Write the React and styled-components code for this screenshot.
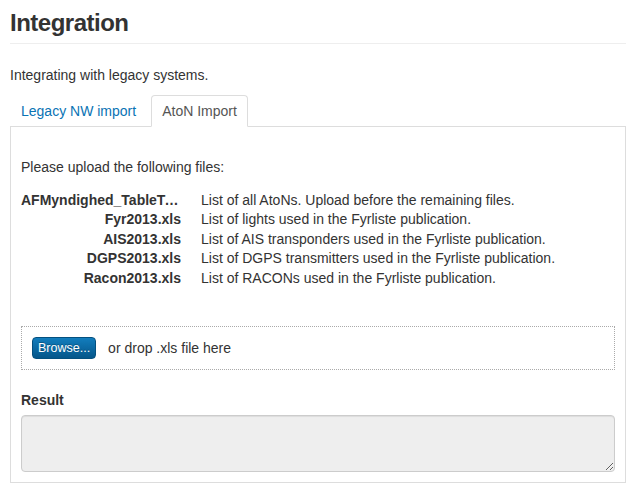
import styled, { createGlobalStyle } from "styled-components"

const GlobalStyle = createGlobalStyle`
  html, body {
    margin: 0;
    padding: 0;
    background: #ffffff;
  }
  body {
    font-family: "Liberation Sans", Arial, Helvetica, sans-serif;
    font-size: 14px;
    line-height: 20px;
    color: #333333;
  }
`

const Page = styled.div`
  padding: 0 0 0 10px;
  width: 616px;
`

const Header = styled.div`
  padding: 8px 0 5px;
  border-bottom: 1px solid #eeeeee;
`

const Title = styled.h1`
  margin: 0;
  font-size: 24px;
  line-height: 30px;
  font-weight: bold;
  letter-spacing: -0.5px;
  color: #333333;
`

const Lead = styled.p`
  margin: 21px 0 10px;
`

const Tabs = styled.ul`
  display: flex;
  list-style: none;
  margin: 0 0 -1px;
  padding: 0;
`

const Tab = styled.li`
  margin-right: 4px;
  padding: 5px 10px;
  border: 1px solid ${p => (p.$active ? "#dddddd" : "transparent")};
  border-bottom-color: ${p => (p.$active ? "#ffffff" : "transparent")};
  border-radius: 4px 4px 0 0;
  background: ${p => (p.$active ? "#ffffff" : "transparent")};
  color: ${p => (p.$active ? "#555555" : "#0a73b4")};
  cursor: pointer;
`

const Panel = styled.div`
  border: 1px solid #dddddd;
  padding: 10px;
`

const Intro = styled.p`
  margin: 20px 0 14px;
`

const FileList = styled.dl`
  margin: 0;
  line-height: 19.4px;
`

const FileRow = styled.div`
  display: flex;
`

const FileName = styled.dt`
  width: 160px;
  flex-shrink: 0;
  text-align: right;
  font-weight: bold;
  white-space: nowrap;
  overflow: hidden;
  text-overflow: ellipsis;
`

const FileDesc = styled.dd`
  margin: 0 0 0 20px;
`

const DropZone = styled.div`
  margin-top: 38px;
  border: 1px dotted #aaaaaa;
  padding: 10px;
  display: flex;
  align-items: center;
  gap: 12px;
`

const BrowseButton = styled.button`
  height: 22px;
  padding: 0 5px;
  font-family: "Liberation Sans", Arial, sans-serif;
  font-size: 12.5px;
  line-height: 20px;
  color: #ffffff;
  text-shadow: 0 -1px 0 rgba(0, 0, 0, 0.25);
  background: linear-gradient(#127dbd, #05568a);
  border: 1px solid #04507f;
  border-radius: 4px;
  cursor: pointer;
`

const DropText = styled.span`
  color: #333333;
`

const Label = styled.div`
  margin: 20px 0 5px;
  font-weight: bold;
`

const ResultBox = styled.textarea`
  display: block;
  box-sizing: border-box;
  width: 100%;
  height: 57px;
  margin: 0;
  padding: 4px 6px;
  border: 1px solid #cccccc;
  border-radius: 4px;
  background: #eeeeee;
  box-shadow: inset 0 1px 1px rgba(0, 0, 0, 0.075);
  font-family: "Liberation Sans", Arial, sans-serif;
  font-size: 14px;
  color: #555555;
  outline: none;
`

const files = [
  ["AFMyndighed_TableTemplate.xls", "List of all AtoNs. Upload before the remaining files."],
  ["Fyr2013.xls", "List of lights used in the Fyrliste publication."],
  ["AIS2013.xls", "List of AIS transponders used in the Fyrliste publication."],
  ["DGPS2013.xls", "List of DGPS transmitters used in the Fyrliste publication."],
  ["Racon2013.xls", "List of RACONs used in the Fyrliste publication."],
]

const App = () => {
  return (
    <Page>
      <GlobalStyle />
      <Header>
        <Title>Integration</Title>
      </Header>
      <Lead>Integrating with legacy systems.</Lead>
      <Tabs>
        <Tab>Legacy NW import</Tab>
        <Tab $active>AtoN Import</Tab>
      </Tabs>
      <Panel>
        <Intro>Please upload the following files:</Intro>
        <FileList>
          {files.map(([name, desc]) => (
            <FileRow key={name}>
              <FileName>{name}</FileName>
              <FileDesc>{desc}</FileDesc>
            </FileRow>
          ))}
        </FileList>
        <DropZone>
          <BrowseButton>Browse...</BrowseButton>
          <DropText>or drop .xls file here</DropText>
        </DropZone>
        <Label>Result</Label>
        <ResultBox readOnly />
      </Panel>
    </Page>
  )
}

export default App
